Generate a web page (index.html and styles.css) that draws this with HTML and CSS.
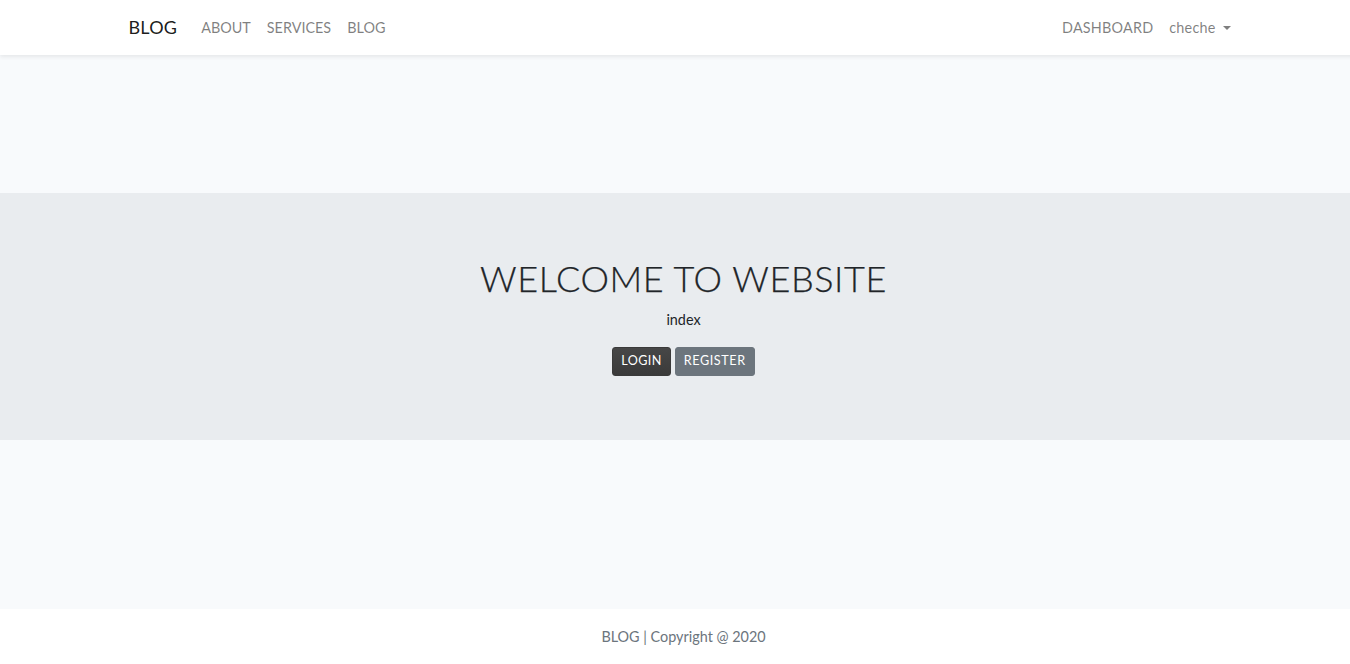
FILE: index.html
```html
<!DOCTYPE html>
<html lang="en">
<head>
<meta charset="utf-8">
<title>BLOG</title>
<link rel="stylesheet" href="styles.css">
</head>
<body>
<div class="page">
  <nav class="navbar">
    <div class="container nav-inner">
      <a class="brand" href="#">BLOG</a>
      <ul class="nav nav-left">
        <li><a class="nav-link" href="#">ABOUT</a></li>
        <li><a class="nav-link" href="#">SERVICES</a></li>
        <li><a class="nav-link" href="#">BLOG</a></li>
      </ul>
      <ul class="nav nav-right">
        <li><a class="nav-link" href="#">DASHBOARD</a></li>
        <li><a class="nav-link dropdown-toggle" href="#">cheche</a></li>
      </ul>
    </div>
  </nav>
  <main class="main">
    <section class="jumbotron">
      <h1 class="title">WELCOME TO WEBSITE</h1>
      <p class="lead">index</p>
      <div class="actions">
        <a class="btn btn-dark" href="#">LOGIN</a>
        <a class="btn btn-secondary" href="#">REGISTER</a>
      </div>
    </section>
  </main>
  <footer class="footer">BLOG | Copyright @ 2020</footer>
</div>
</body>
</html>
```
FILE: styles.css
```css
html, body {
  margin: 0;
  padding: 0;
  overflow: hidden;
}
body {
  background: #f8fafc;
  font-family: "Lato", "Noto Sans", sans-serif;
  font-size: 14.4px;
  line-height: 1.6;
  color: #212529;
}
.page {
  width: 1367px;
  min-height: 664px;
  display: flex;
  flex-direction: column;
}
a { text-decoration: none; }
.navbar {
  background: #fff;
  padding: 8px 16px;
  box-shadow: 0 2px 4px rgba(0,0,0,.075);
  position: relative;
  z-index: 1;
}
.container {
  max-width: 1140px;
  margin: 0 auto;
  padding: 0 15px;
  box-sizing: border-box;
}
.nav-inner {
  display: flex;
  align-items: center;
}
.brand {
  color: rgba(0,0,0,.9);
  font-size: 18px;
  line-height: 1.6;
  padding: 4px 0;
  margin-right: 16px;
  letter-spacing: 0.2px;
}
.nav {
  display: flex;
  list-style: none;
  margin: 0;
  padding: 0;
}
.nav-right { margin-left: auto; }
.nav-link {
  display: block;
  padding: 8px;
  color: rgba(0,0,0,.5);
}
.nav-right .nav-link { letter-spacing: 0.2px; }
.dropdown-toggle::after {
  content: "";
  display: inline-block;
  margin-left: 7px;
  vertical-align: 3px;
  border-top: 4.5px solid;
  border-left: 4.5px solid transparent;
  border-right: 4.5px solid transparent;
}
.main {
  padding-top: 138px;
  flex: 1;
}
.jumbotron {
  background: #e9ecef;
  padding: 64px 32px;
  text-align: center;
}
.title {
  font-size: 36px;
  font-weight: 300;
  line-height: 1.2;
  margin: 0 0 8px;
  letter-spacing: 0.6px;
  -webkit-text-stroke: 0.25px #212529;
}
.lead {
  margin: 0 0 16px;
}
.actions {
  display: flex;
  justify-content: center;
  gap: 4px;
}
.btn {
  display: inline-block;
  font-size: 12.6px;
  line-height: 1.5;
  padding: 4px 8px;
  border-radius: 3px;
  border: 1px solid transparent;
  color: #fff;
  letter-spacing: 0.4px;
}
.btn-dark {
  background: linear-gradient(#474747, #3a3a3a);
  border-color: #3a3a3a;
}
.btn-secondary {
  background: #6c757d;
  border-color: #6c757d;
  letter-spacing: 0.6px;
}
.footer {
  background: #fff;
  height: 56px;
  line-height: 56px;
  text-align: center;
  color: #6c757d;
  margin-top: 169px;
}
```
